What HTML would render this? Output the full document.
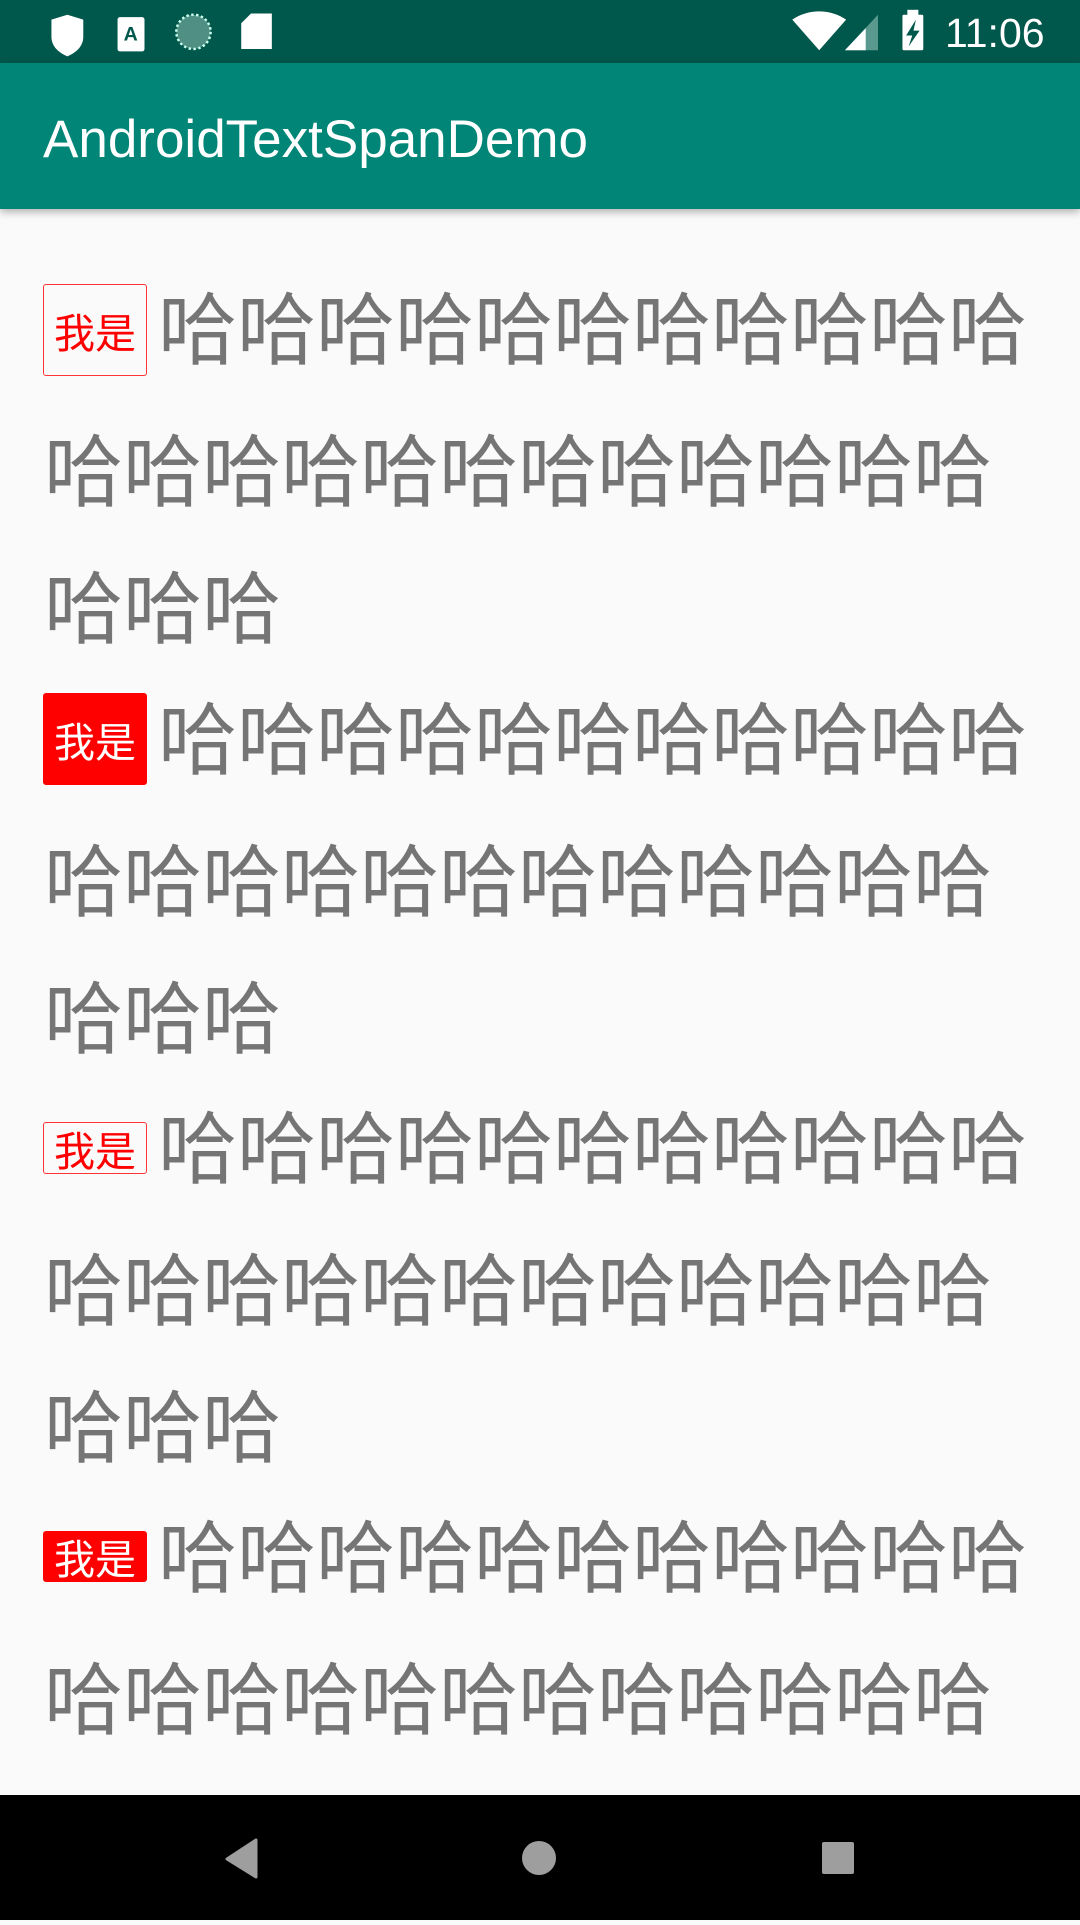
<!DOCTYPE html>
<html><head><meta charset="utf-8"><style>
*{margin:0;padding:0;box-sizing:border-box}
body{width:1080px;height:1920px;background:#fafafa;position:relative;overflow:hidden;font-family:"Liberation Sans","Noto Sans CJK SC",sans-serif}
.sb{position:absolute;left:0;top:0;width:1080px;height:63px;background:#00574b}
.ab{position:absolute;left:0;top:63px;width:1080px;height:146px;background:#008577;box-shadow:0 3px 8px rgba(0,0,0,.3)}
.title{position:absolute;left:43px;top:113px;font-size:53px;color:#fff;line-height:1;letter-spacing:0px}
.l{position:absolute;font-size:79px;line-height:79px;color:#757575;font-family:"Noto Sans CJK SC",sans-serif;white-space:nowrap}
.b{position:absolute;left:43px;width:104px;border:1.5px solid #f33;border-radius:3px;color:#f00;font-size:41px;font-family:"Noto Sans CJK SC",sans-serif;display:flex;align-items:center;justify-content:center;line-height:1}
.f{background:#f00;color:#fff;border-color:#f00}
.nav{position:absolute;left:0;top:1795px;width:1080px;height:125px;background:#000}
</style></head><body>
<div class="sb">
<svg width="1080" height="63" style="position:absolute;left:0;top:0">
<g transform="scale(1.2245)">
<path d="M55 12 L68 16 V30 C68 38 62 43 55 46 C48 43 42 38 42 30 V16 Z" fill="#fff"/>
<rect x="96" y="14" width="22" height="28" rx="2" fill="#fff"/>
<text x="101" y="33" font-size="16" font-family="Liberation Sans" font-weight="bold" fill="#00574b">A</text>
<circle cx="158" cy="26" r="14" fill="#4f8f84"/>
<circle cx="158" cy="26" r="14" fill="none" stroke="#cfe" stroke-width="2" stroke-dasharray="2 2"/>
<path d="M205 11 H222 V40 H197 V19 Z" fill="#fff"/>
<path d="M647 16 C660 7 678 7 691 16 L669 41 Z" fill="#fff"/>
<path d="M690 41 L717 12 V41 Z" fill="#5a9a8e"/>
<path d="M690 41 L707 23 V41 Z" fill="#fff"/>
<rect x="737" y="12" width="17" height="29" rx="1" fill="#fff"/>
<rect x="741" y="8" width="9" height="5" fill="#fff"/>
<path d="M748 16 L740 29 H745 L742 38 L751 25 H746 Z" fill="#00574b"/>
</g>
<text x="945" y="47" font-size="41" font-family="Liberation Sans" fill="#fff">11:06</text>
</svg>
</div>
<div class="ab"></div>
<div class="title">AndroidTextSpanDemo</div>

<div class="b" style="top:284px;height:92px">我是</div>
<div class="l" style="left:158px;top:284px">哈哈哈哈哈哈哈哈哈哈哈</div>
<div class="l" style="left:44px;top:426px">哈哈哈哈哈哈哈哈哈哈哈哈</div>
<div class="l" style="left:44px;top:563px">哈哈哈</div>

<div class="b f" style="top:693px;height:92px">我是</div>
<div class="l" style="left:158px;top:694px">哈哈哈哈哈哈哈哈哈哈哈</div>
<div class="l" style="left:44px;top:836px">哈哈哈哈哈哈哈哈哈哈哈哈</div>
<div class="l" style="left:44px;top:973px">哈哈哈</div>

<div class="b" style="top:1122px;height:52px">我是</div>
<div class="l" style="left:158px;top:1103px">哈哈哈哈哈哈哈哈哈哈哈</div>
<div class="l" style="left:44px;top:1245px">哈哈哈哈哈哈哈哈哈哈哈哈</div>
<div class="l" style="left:44px;top:1382px">哈哈哈</div>

<div class="b f" style="top:1531px;height:51px">我是</div>
<div class="l" style="left:158px;top:1512px">哈哈哈哈哈哈哈哈哈哈哈</div>
<div class="l" style="left:44px;top:1654px">哈哈哈哈哈哈哈哈哈哈哈哈</div>

<div class="nav">
<svg width="1080" height="125">
<path d="M256 45 V82 L227 64 Z" fill="#9e9e9e" stroke="#9e9e9e" stroke-width="3" stroke-linejoin="round"/>
<circle cx="539" cy="63" r="17" fill="#9e9e9e"/>
<rect x="822" y="47" width="32" height="32" rx="2" fill="#9e9e9e"/>
</svg>
</div>
</body></html>
